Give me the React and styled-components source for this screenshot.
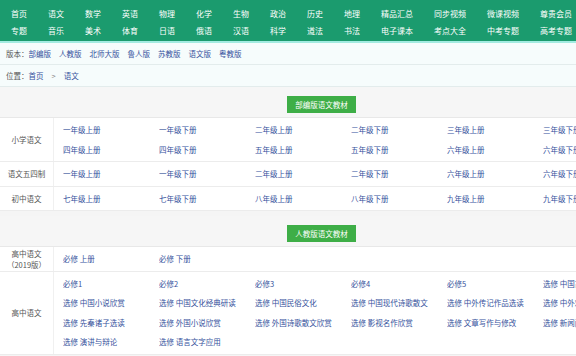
import React from "react";
import styled, { createGlobalStyle } from "styled-components";

const GlobalStyle = createGlobalStyle`
  body {
    margin: 0;
    overflow: hidden;
    background: #f5f5f5;
    font-family: "Noto Sans CJK SC", "Noto Sans", sans-serif;
  }
`;

const navCols = [
  ["首页", "专题"],
  ["语文", "音乐"],
  ["数学", "美术"],
  ["英语", "体育"],
  ["物理", "日语"],
  ["化学", "俄语"],
  ["生物", "汉语"],
  ["政治", "科学"],
  ["历史", "道法"],
  ["地理", "书法"],
  ["精品汇总", "电子课本"],
  ["同步视频", "考点大全"],
  ["微课视频", "中考专题"],
  ["尊贵会员", "高考专题"],
];

const versions = ["部编版", "人教版", "北师大版", "鲁人版", "苏教版", "语文版", "粤教版"];

const bubian = [
  {
    label: "小学语文",
    links: [
      "一年级上册", "一年级下册", "二年级上册", "二年级下册", "三年级上册", "三年级下册",
      "四年级上册", "四年级下册", "五年级上册", "五年级下册", "六年级上册", "六年级下册",
    ],
  },
  {
    label: "语文五四制",
    links: ["一年级上册", "一年级下册", "二年级上册", "二年级下册", "六年级上册", "六年级下册"],
  },
  {
    label: "初中语文",
    links: ["七年级上册", "七年级下册", "八年级上册", "八年级下册", "九年级上册", "九年级下册"],
  },
];

const renjiao = [
  {
    label: ["高中语文", "（2019版）"],
    links: ["必修 上册", "必修 下册"],
  },
  {
    label: ["高中语文"],
    links: [
      "必修1", "必修2", "必修3", "必修4", "必修5", "选修 中国古代诗歌散文欣赏",
      "选修 中国小说欣赏", "选修 中国文化经典研读", "选修 中国民俗文化", "选修 中国现代诗歌散文", "选修 中外传记作品选读", "选修 中外戏剧名作欣赏",
      "选修 先秦诸子选读", "选修 外国小说欣赏", "选修 外国诗歌散文欣赏", "选修 影视名作欣赏", "选修 文章写作与修改", "选修 新闻阅读与实践",
      "选修 演讲与辩论", "选修 语言文字应用",
    ],
  },
];

function App() {
  return (
    <>
      <GlobalStyle />
      <Page>
        <Nav>
          {navCols.map((col) =>
            col.map((item, i) => (
              <NavItem key={item} $row={i + 1}>
                {item}
              </NavItem>
            ))
          )}
        </Nav>

        <InfoBar>
          <span>版本：</span>
          {versions.map((v) => (
            <InfoLink key={v} $gap>
              {v}
            </InfoLink>
          ))}
        </InfoBar>
        <InfoBar>
          <span>位置：</span>
          <InfoLink>首页</InfoLink>
          <Arrow>&gt;</Arrow>
          <InfoLink>语文</InfoLink>
        </InfoBar>

        <Section>
          <SectionHead>
            <Tag>部编版语文教材</Tag>
          </SectionHead>
          <Table>
            {bubian.map((row) => (
              <Row key={row.label}>
                <Label>{row.label}</Label>
                <Links>
                  {row.links.map((l, i) => (
                    <LinkItem key={i}>{l}</LinkItem>
                  ))}
                </Links>
              </Row>
            ))}
          </Table>
        </Section>

        <Section>
          <SectionHead>
            <Tag>人教版语文教材</Tag>
          </SectionHead>
          <Table>
            {renjiao.map((row, r) => (
              <Row key={r}>
                <Label>
                  {row.label.map((t) => (
                    <div key={t}>{t}</div>
                  ))}
                </Label>
                <Links>
                  {row.links.map((l, i) => (
                    <LinkItem key={i}>{l}</LinkItem>
                  ))}
                </Links>
              </Row>
            ))}
          </Table>
        </Section>
      </Page>
    </>
  );
}

const Page = styled.div`
  width: 643px;
`;

const Nav = styled.div`
  background: #1b9b6e;
  border-bottom: 2px solid #a3ebe1;
  height: 43px;
  box-sizing: border-box;
  padding: 5px 0 0 11px;
  display: grid;
  grid-template-rows: 17px 17px;
  grid-auto-flow: column;
  grid-auto-columns: max-content;
  column-gap: 21px;
  align-items: center;
`;

const NavItem = styled.div`
  grid-row: ${(p) => p.$row};
  color: #ffffff;
  font-size: 8px;
  white-space: nowrap;
`;

const InfoBar = styled.div`
  height: 21px;
  background: #f6fcfc;
  border-bottom: 1px solid #e3ecec;
  display: flex;
  align-items: center;
  padding-left: 6px;
  font-size: 7.5px;
  color: #555;
  white-space: nowrap;
`;

const InfoLink = styled.span`
  color: #35519c;
  margin-right: ${(p) => (p.$gap ? "8px" : "0")};
`;

const Arrow = styled.span`
  color: #888;
  margin: 0 8px;
`;

const Section = styled.div`
  margin-bottom: 5px;
`;

const SectionHead = styled.div`
  height: 31px;
  background: #f6f6f6;
  border-bottom: 1px solid #e8e8e8;
  display: flex;
  justify-content: center;
  align-items: center;
  padding-top: 4px;
  box-sizing: border-box;
`;

const Tag = styled.div`
  background: #3eae47;
  color: #ffffff;
  font-size: 7.5px;
  height: 17px;
  line-height: 17px;
  padding: 0 8px;
  white-space: nowrap;
`;

const Table = styled.div`
  background: #ffffff;
`;

const Row = styled.div`
  display: flex;
  border-bottom: 1px solid #ececec;
`;

const Label = styled.div`
  width: 53px;
  flex-shrink: 0;
  border-right: 1px solid #f0f0f0;
  display: flex;
  flex-direction: column;
  justify-content: center;
  align-items: center;
  font-size: 7.5px;
  line-height: 11px;
  color: #555;
  white-space: nowrap;
`;

const Links = styled.div`
  flex: 1;
  display: grid;
  grid-template-columns: repeat(6, 96px);
  padding: 2px 0 2px 9px;
`;

const LinkItem = styled.div`
  font-size: 7.5px;
  line-height: 19.5px;
  color: #35519c;
  white-space: nowrap;
  overflow: hidden;
  padding-right: 10px;
`;

export default App;
